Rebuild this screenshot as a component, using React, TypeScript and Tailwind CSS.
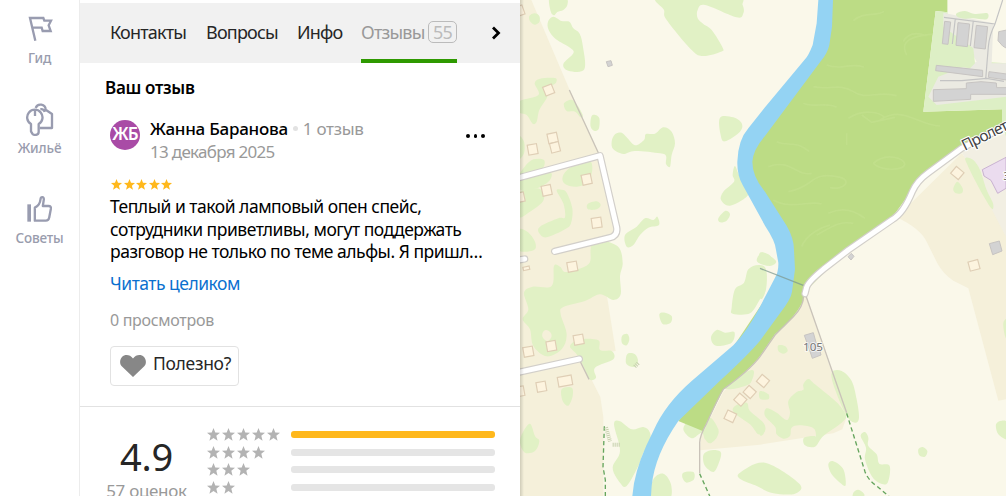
import type { ReactNode } from "react";

const sidebar = [
  { label: "Гид", icon: <FlagIcon />, className: "h-[90px] pt-[12px]" },
  { label: "Жильё", icon: <KeysIcon />, className: "h-[91px] pt-[12px]" },
  { label: "Советы", icon: <ThumbIcon />, className: "h-[90px] pt-[11px]" },
];

const ratings = [
  { stars: 5, bar: "bg-[#ffb81c]" },
  { stars: 4, bar: "bg-[#e5e5e5]" },
  { stars: 3, bar: "bg-[#e5e5e5]" },
  { stars: 2, bar: "bg-[#e5e5e5]" },
];

function FlagIcon() {
  return (
    <svg viewBox="81 45 78 84" className="h-7 w-[26px]" fill="none" stroke="#999cb0" strokeWidth="7">
      <path d="M106 122 90 54h40l3 8h20l-7 14 6 17h-24l-3-10H98" />
    </svg>
  );
}

function KeysIcon() {
  return (
    <svg viewBox="75 303 87 102" className="h-[34px] w-[29px]" fill="none" stroke="#999cb0" strokeWidth="7" strokeLinejoin="round">
      <path d="M93 369a23 23 0 1 1 23 0v24c0 10-14 11-19 5l-4-7zM105 325v20" />
      <path d="M107 321a15.500 15.500 0 0 1 30 5l19 13v42h-37M121 325c7-2 12 2 13 8" />
    </svg>
  );
}

function ThumbIcon() {
  return (
    <svg viewBox="81 580 80 84" className="h-7 w-[27px]" fill="none" stroke="#999cb0" strokeWidth="7" strokeLinejoin="round">
      <path d="M90 608v52" strokeWidth="11" />
      <path d="M107 618c10-5 16-14 17-25 1-9 10-8 10 0l-3 20h17c6 0 8 3 7 9l-5 26c-1 6-4 9-10 9h-33z" />
    </svg>
  );
}

function Star({ className }: { className: string }) {
  return (
    <svg viewBox="0 0 24 24" className={className} fill="currentColor">
      <path d="m12 0 3.3 8.4 8.7.5-6.8 5.6L19.500 23.500 12 18.400 4.500 23.500l2.300-9L0 8.900l8.700-.5z" />
    </svg>
  );
}

// closed smooth curve through "x,y" points
function blob(source: string) {
  const p = source.split(" ").map((pair) => pair.split(",").map(Number));
  const n = p.length;
  let d = `M${p[0][0]} ${p[0][1]}`;
  for (let i = 0; i < n; i++) {
    const a = p[(i + n - 1) % n];
    const b = p[i];
    const c = p[(i + 1) % n];
    const e = p[(i + 2) % n];
    d += `C${b[0] + (c[0] - a[0]) / 6} ${b[1] + (c[1] - a[1]) / 6} ${c[0] - (e[0] - b[0]) / 6} ${c[1] - (e[1] - b[1]) / 6} ${c[0]} ${c[1]}`;
  }
  return d + "Z";
}

const groves = [
  {
    x: 0,
    y: 0,
    shapes: [
      "90,-10 138,-5 142,15 130,30 112,36 102,46 92,34",
      "44,40 58,48 58,66 44,74 30,64 28,48",
      "100,50 125,63 148,65 160,85 178,100 188,135 193,208 145,212 130,192 160,160 150,143 108,118 86,90 84,65",
      "44,250 60,236 105,234 108,248 90,262 80,295 58,330 50,365 38,371 20,345 -5,335 -5,305 55,285",
      "132,310 155,299 172,316 188,345 182,352 165,335 140,333",
      "214,350 226,345 238,355 237,385 225,393 212,380",
      "418,-10 432,30 440,60 515,150 550,168 603,155 608,143 575,90 550,72 533,55 533,30 555,15 650,52 670,40 668,15 645,-10",
      "275,425 285,403 305,398 320,412 345,436 372,420 378,402 405,401 430,382 455,395 465,430 455,465 450,500 438,492 438,468 420,460 345,453 310,462 280,448",
      "600,353 640,352 665,370 660,395 615,424 602,405",
      "645,498 638,525 642,545 610,575 603,600 630,617 680,590 690,560 660,530",
      "595,655 615,633 630,642 620,662 600,667",
      "315,705 350,680 375,655 400,660 412,650 417,675 385,683 360,705 340,735 320,740",
      "14,500 40,478 72,480 68,505 35,515 -5,560 -5,530",
      "128,530 150,503 205,482 217,505 205,545 170,560 135,552",
      "110,572 125,569 140,578 157,625 153,670 135,688 80,712 58,700 60,680 115,655 135,652 130,610",
      "203,612 230,604 242,615 230,628 204,628",
      "-5,580 50,565 70,580 68,605 30,635 -5,650",
      "-5,690 22,695 45,725 42,750 -5,750",
      "-5,410 12,425 12,460 -5,475",
      "-5,540 85,515 90,540 50,565 -5,568",
    ],
  },
  {
    x: 0,
    y: 738,
    shapes: [
      "220,-20 292,0 308,50 300,90 302,145 280,162 240,145 195,165 130,183 122,205 140,265 125,310 80,331 40,300 30,250 8,220 25,190 12,140 38,122 95,120 102,60 120,62 140,78 205,55 212,10",
      "325,322 345,325 354,345 342,363 320,355 318,335",
      "306,270 322,264 328,280 320,298 306,292",
      "418,205 435,200 455,210 452,230 428,234",
      "635,185 645,130 672,110 685,70 715,57 738,70 738,130 720,160 690,202 638,203",
      "573,275 590,252 615,260 643,258 635,290 588,299",
      "150,300 180,280 235,283 240,312 275,315 280,340 225,365 228,395 208,400 190,360 170,325",
      "125,430 155,425 158,450 145,479 128,465",
      "8,560 30,533 45,570 58,585 45,615 15,620 0,590",
      "282,535 300,526 335,550 370,543 390,560 390,600 370,620 355,660 320,720 300,710 278,665 300,615",
      "400,700 430,683 453,715 448,760 390,760",
      "490,680 520,678 522,700 500,710 488,697",
      "555,620 580,612 603,620 595,655 580,678 555,660 549,635",
      "490,550 510,525 550,552 570,515 595,550 590,575 570,592 555,580 545,560 515,577",
      "660,680 735,650 838,713 825,743 760,742 712,721 662,700",
      "712,35 730,20 768,45 750,60 715,50",
      "610,415 695,372 695,405 675,420 625,430",
      "645,480 680,470 690,495 730,530 735,555 715,565 690,535 642,500",
    ],
  },
  {
    x: 720,
    y: 738,
    shapes: [
      "55,298 75,300 83,315 70,323 55,315",
      "215,380 245,375 275,405 290,460 297,515 285,530 260,510 225,430",
      "130,415 145,399 165,415 220,460 240,480 258,510 245,530 190,570 165,602 135,598 132,575 165,570 168,580 162,548 120,538 95,545 90,570 70,578 50,565 45,542 15,510 20,487 50,500 80,522 90,500 85,465 110,438 130,432",
      "302,570 315,558 325,575 325,600 350,625 358,653 389,660 383,710 360,712 335,690 315,640 318,605",
      "205,655 220,646 250,670 257,718 240,710 215,685",
      "475,610 488,603 502,615 495,632 478,628",
      "708,535 725,524 745,532 745,580 715,565",
      "280,740 295,731 313,745 305,760 280,760",
      "0,435 25,445 25,460 0,458",
      "0,535 15,545 10,565 0,567",
      "-5,70 18,80 15,140 0,155",
      "730,230 745,220 745,280 735,270",
      "0,20 25,25 36,40 25,58 0,48",
    ],
  },
  {
    x: 720,
    y: 0,
    shapes: ["618,473 640,480 660,510 680,570 699,610 694,625 655,560 620,490", "580,565 592,545 608,565 605,580 585,578"],
  },
];

// [x, y, width, height, rotation]
const houses = [
  [86, 270, 28, 28, -22],
  [98, 414, 29, 29, -12],
  [105, 442, 27, 29, -14],
  [38, 448, 28, 30, -10],
  [200, 538, 28, 30, -12],
  [80, 571, 28, 30, -12],
  [0, 592, 26, 28, -12],
  [230, 668, 29, 30, -8],
  [157, 800, 29, 29, -10],
  [19, 805, 19, 10, -12],
  [176, 1019, 29, 29, -10],
  [94, 1038, 28, 29, -10],
  [25, 1055, 29, 29, -10],
  [135, 1143, 42, 29, -10],
  [64, 1160, 28, 29, -10],
  [0, 1174, 25, 29, -10],
  [631, 1249, 29, 28, 25],
  [661, 1199, 29, 27, 42],
  [689, 1176, 29, 27, 42],
  [729, 1143, 29, 27, 40],
  [1312, 519, 30, 27, 40],
  [1362, 796, 30, 28, -15],
  [0, 32, 22, 28, -20],
];

const river =
  "M895 0 890 70 878 135Q865 168 855 178L735 322 685 385Q654 420 652 485 651 525 668 555L735 677Q767 725 768 750L775 788Q776 815 765 833L720 920Q680 995 640 1036L515 1143Q435 1213 400 1293 355 1380 342 1450L337 1488H393L395 1458Q404 1365 475 1263L600 1142Q685 1064 720 1022L780 940Q814 895 816 875L825 808 822 750Q822 715 800 677L735 575Q697 530 697 485 700 447 735 408L905 180Q922 160 928 135L936 80 939 0Z";

const mainRoad = "M1470 373 1325 445 1225 518Q1190 543 1177 575 1150 640 1118 658L985 750 910 808Q861 848 859 865L855 881";
const sideRoads = ["M-10 535 240 467 290 682Q294 707 270 713L104 754", "M-10 781 14 777", "M-10 1118 178 1077"];

function CityMap() {
  return (
    <svg viewBox="0 0 1458 1488" className="h-[496px] w-[486px]" fontFamily="'Noto Sans', sans-serif">
      <path d="M0 0h1458v1488H0z" fill="#faf8ea" />
      <g fill="#f5f0da">
        <path d="M0 0h34l116 272 90 195 53 220-12 28-51 23 32 157 25 158-107 18 61 120 9 60v240H0z" />
        <path d="M855 881 910 1045 978 1238 977 1260 967 1288 940 1300 720 1334 540 1351 543 1310 610 1175 720 1065z" />
        <path d="M1130 652 1325 460 1350 490 1458 700V1198L1435 1202 1345 865 1300 842Q1270 823 1252 790L1220 725Q1200 685 1130 652" />
      </g>
      <path d="M1325 455 1458 400V710z" fill="#f2efe3" />
      {groves.map((tile) => (
        <g key={`${tile.x}-${tile.y}`} transform={`translate(${tile.x} ${tile.y})`} fill="#e1f1c5">
          {tile.shapes.map((shape) => (
            <path key={shape} d={blob(shape)} />
          ))}
        </g>
      ))}
      <path d={blob("68,998 78,990 92,998 94,1012 82,1024 68,1012")} fill="#f5f0da" />

      <path
        d="M935 0H1283V37L1247 33 1210 335 1446 328V378L1325 440 1220 518 1180 565 1118 650 985 745 855 875 850 903Q820 960 765 1003L720 1068Q690 1108 610 1168L548 1293 475 1263 600 1100 800 800 690 540V440L900 170z"
        fill="#bcdc85"
      />
      <g fill="none" stroke="#c3e08f" strokeWidth="5" opacity=".65">
        <path d="M1000 62c30-28 72-12 92-28M1160 165c-28-55 38-60 130-68M1150 125c14-28 42-28 70-18M920 195c45 18 64-8 112 6M880 260c40 12 80-12 120 15s72-5 130 12M850 310c30 15 70-6 100 12M985 355c45-30 95-18 110-2M1080 360c70-45 110 15 180 18M770 425c32 15 60-5 98 30M745 500c65-25 85 30 130 20M1060 490c38-35 95-15 94 3s-68 22-94-3M805 575c80-15 65-60 145-45 52 8 24 42-20 33M760 600c50 30 112 0 145 12M925 640c45-22 80-8 110 15M890 705c55-30 72-42 110-35M980 400v35m45-90 30 22 70-15M845 740c15-40 65-60 85-65" />
      </g>
      <path d={river} fill="#94d3f3" />

      <path d="M1247 33 1283 37V0h175V410l-12-40v-42l-236 7z" fill="#ddefc5" />
      <path d="M1283 0h175v190l-60-5-35 40-12-90-68-90z" fill="#faf8ea" />
      <path d="M1270 38 1420 70 1415 190 1458 190V290L1380 300 1250 315 1225 290 1255 230 1370 185 1345 140 1270 135z" fill="#ebeae2" />
      <path d={blob("1310,40 1335,33 1365,42 1402,40 1400,58 1360,55 1335,56 1312,50")} fill="#ddefc5" />
      <path d="M1248 190 1255 70 1360 145 1365 190 1350 205z" fill="#ddefc5" />
      <g fill="none" stroke="#c4c4c4" strokeWidth="3.500">
        <path d="M1272 52 1425 72M1448 0 1425 72Q1408 105 1405 140L1397 238M1306 55 1297 132M1360 62 1351 138M1260 242 1325 242 1400 235 1452 244" />
      </g>
      <g fill="#d3d3d3" stroke="#c7c4c2" strokeWidth="3">
        <path d="M1274 64 1292 66 1284 133 1267 131zM1314 68 1349 72 1342 140 1308 136zM1369 76 1403 80 1396 147 1362 143zM1249 196 1388 211V230L1247 212zM1407 215 1460 222V240L1405 232zM1240 269 1339 266V249L1383 245 1429 249 1430 263H1460V283L1352 283V298L1240 304zM1436 95 1460 90V145L1448 138 1434 122zM1408 731 1438 723 1446 753 1418 764z" />
        <path d="m984 770 10-10 8 9-9 11zM259 185l14-3 4 14-13 4zM853 1006 880 998 888 1027 895 1034 903 1065 877 1075 868 1048z" />
      </g>
      <path d="M1387 509 1458 472V565L1433 580 1413 541 1392 528z" fill="#ebdcef" stroke="#c9b2d1" strokeWidth="3" />

      <g fill="none" stroke="#c9c3b9" strokeWidth="4">
        <path d="M148 270 238 465M180 1083 207 1138M858 888 980 1238M850 890Q850 920 820 950L765 1005 720 1070Q690 1110 610 1168 596 1190 560 1270 538 1310 539 1330V1420" />
      </g>
      <path d="M720 805 852 857" fill="none" stroke="#7f9a90" strokeWidth="4" opacity=".75" />
      <g fill="none" stroke="#65a55d" strokeWidth="4" strokeDasharray="13 9">
        <path d="M980 1240 1035 1415Q1044 1440 1070 1458L1110 1492M539 1421 570 1490M253 1279 249 1400 256 1440V1488" />
      </g>
      <g fill="none" stroke="#c6d0ad" strokeWidth="12" strokeDasharray="3 3">
        <path d="M258 1282 270 1324M278 1334H300M344 1100 356 1088" />
      </g>
      <g fill="#fdf4df" stroke="#dfceb5" strokeWidth="3.500">
        {houses.map(([x, y, w, h, r]) => (
          <rect key={`${x}-${y}`} x={-w / 2} y={-h / 2} width={w} height={h} transform={`translate(${x} ${y}) rotate(${r})`} />
        ))}
      </g>
      <g fill="none" strokeLinecap="round" strokeLinejoin="round">
        {[mainRoad, ...sideRoads].map((d) => (
          <path key={d} d={d} stroke="#d2cfca" strokeWidth="22" />
        ))}
        {[mainRoad, ...sideRoads].map((d) => (
          <path key={d} d={d} stroke="#fff" strokeWidth="15" />
        ))}
      </g>
      <g fill="#666" stroke="#fff" strokeWidth="6" strokeLinejoin="round" paintOrder="stroke">
        <text x="849" y="1052" fontSize="35" fill="#777" strokeOpacity=".7">105</text>
        <text x="1334" y="453" fontSize="46" letterSpacing="-2.500" fill="#444" transform="rotate(-26 1334 453)">Пролет</text>
        <text x="1450" y="539" fontSize="34">3</text>
      </g>
    </svg>
  );
}

function Tab({ children, className = "" }: { children: ReactNode; className?: string }) {
  return <div className={`flex h-[60px] shrink-0 items-center whitespace-nowrap ${className}`}>{children}</div>;
}

export default function App() {
  return (
    <div className="flex h-[496px] w-[1006px] overflow-hidden bg-white font-['Noto_Sans',sans-serif] text-black">
      <nav className="w-20 shrink-0 border-r border-[#ececec]">
        {sidebar.map((item) => (
          <div key={item.label} className={`flex flex-col items-center ${item.className}`}>
            <div className="flex h-[34px] items-center">{item.icon}</div>
            <span className="mt-[3px] text-[13.500px] leading-[18px] font-medium tracking-[-0.150px] text-[#999cad]">{item.label}</span>
          </div>
        ))}
      </nav>

      <main className="w-[440px] shrink-0 pt-[3px]">
        <div className="flex h-[60px] bg-[#f1f1f1] pl-[30px] text-[18px] tracking-[-0.800px] text-[#262626]">
          <Tab className="w-24 pb-[2px]">Контакты</Tab>
          <Tab className="w-[91px] pb-[2px]">Вопросы</Tab>
          <Tab className="w-16 pb-[2px]">Инфо</Tab>
          <Tab className="w-24 justify-between border-b-4 border-[#2e9900] pt-[2px] text-[#999]">
            <span>Отзывы</span>
            <span className="flex h-[22px] w-[29px] items-center justify-center rounded-[5px] border border-[#bbb] text-[#bbb]">55</span>
          </Tab>
          <svg viewBox="0 0 10 14" className="mt-[23px] ml-[34px] h-[14px] w-[10px]" fill="none" stroke="#000" strokeWidth="2.800">
            <path d="m2 1.500 5.500 5.500L2 12.500" />
          </svg>
        </div>

        <section className="h-[343px] pt-[13px] pl-[26px]">
          <h2 className="-ml-px h-[24px] text-[17px] leading-6 font-semibold tracking-[-0.300px]">Ваш отзыв</h2>
          <div className="mt-[17px] ml-1 flex h-[46px]">
            <div className="mt-[3px] flex size-[30px] items-center justify-center rounded-full bg-[#a94ba6] pb-[2px] text-[17px] font-semibold tracking-[-0.8px] text-white">
              ЖБ
            </div>
            <div className="ml-[10px] w-[315px] text-[17px] leading-[23px] tracking-[-0.700px] whitespace-nowrap text-[#999]">
              <div className="flex items-center">
                <span className="font-medium tracking-[-0.250px] text-black">Жанна Баранова</span>
                <span className="mx-[5px] size-[5px] rounded-full bg-[#e2e2e2]" />
                <span className="tracking-[-0.3px]">1 отзыв</span>
              </div>
              <div>13 декабря 2025</div>
            </div>
            <div className="mt-[17px] ml-px flex gap-1">
              <i className="size-[3.500px] rounded-full bg-black" />
              <i className="size-[3.500px] rounded-full bg-black" />
              <i className="size-[3.500px] rounded-full bg-black" />
            </div>
          </div>
          <div className="mt-[16px] ml-[5px] flex gap-[1.500px] text-[#ffb81c]">
            {[1, 2, 3, 4, 5].map((n) => (
              <Star key={n} className="size-[11px]" />
            ))}
          </div>
          <p className="mt-[5px] ml-1 text-[17.500px] leading-[22.500px] tracking-[-0.480px] whitespace-nowrap">
            Теплый и такой ламповый опен спейс,
            <br />
            сотрудники приветливы, могут поддержать
            <br />
            разговор не только по теме альфы. Я пришл…
          </p>
          <div className="mt-[8px] ml-1 text-[17.500px] leading-6 tracking-[-0.500px] text-[#0b70cf]">Читать целиком</div>
          <div className="mt-[13px] ml-1 text-[16px] leading-6 tracking-[-0.300px] text-[#999]">0 просмотров</div>
          <button className="mt-[14px] ml-1 flex h-10 w-[129px] items-center rounded border border-[#e2e2e2] pl-[9px] text-[17.500px] tracking-[-0.300px] text-[#262626]">
            <svg viewBox="0 0 26 22" className="mt-px h-[22px] w-[26px] shrink-0" fill="#878787">
              <path d="M13 22 2 11.500C-1 8.500 0 4 2 2c3-3 8-2.500 11 1.500C16-.5 21-1 24 2c2 2 3 6.500 0 9.500z" />
            </svg>
            <span className="-mt-[4px] ml-[7px]">Полезно?</span>
          </button>
        </section>

        <section className="flex h-[90px] border-t border-[#e2e2e2]">
          <div className="w-[127px] shrink-0 pt-[28px] pl-[6px] text-center">
            <div className="h-[44px] text-[38px] leading-[42px] tracking-[-0.300px] text-[#262626]">4.9</div>
            <div className="text-[17px] leading-6 tracking-[-0.300px] text-[#999]">57 оценок</div>
          </div>
          <div className="pt-[19px]">
            {ratings.map((row) => (
              <div key={row.stars} className="flex h-[17.500px] items-center">
                <div className="flex w-[84px] gap-[2px] text-[#b3b3b3]">
                  {Array.from({ length: row.stars }, (_, n) => (
                    <Star key={n} className="size-[13px]" />
                  ))}
                </div>
                <div className={`h-[7px] w-[204px] rounded-[3px] ${row.bar}`} />
              </div>
            ))}
          </div>
        </section>
      </main>

      <aside className="relative w-[486px] shrink-0">
        <CityMap />
        <div className="absolute inset-y-0 left-0 w-1 bg-gradient-to-r from-black/15 to-transparent" />
      </aside>
    </div>
  );
}
